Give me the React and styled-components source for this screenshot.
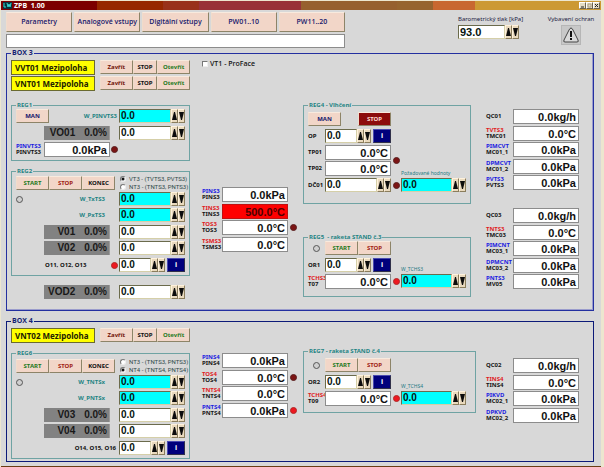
import React, { useId, useState } from "react";
import styled, { createGlobalStyle, css } from "styled-components";

const Global = createGlobalStyle`
  *, *::before, *::after { box-sizing: border-box; }
  body { margin: 0; background: #d8d8d8; }
  button, input { font: inherit; margin: 0; border-radius: 0; }
`;

const ui = `"Noto Sans", "Open Sans", sans-serif`;
const narrow = `"Open Sans", "Noto Sans", sans-serif`;
const plain = `Roboto, "Liberation Sans", sans-serif`;
const digits = `"Liberation Sans", Arial, sans-serif`;

const Window = styled.div`
  min-height: 100vh;
  display: flex;
  flex-direction: column;
  background: #d8d8d8;
  border: solid #ece6cf;
  border-width: 1px 3px 0 1px;
  font: 600 6px/6px ${ui};
  color: #111;
`;

const TitleBar = styled.header`
  display: flex;
  align-items: center;
  height: 9px;
  padding: 0 1px 0 2px;
  gap: 2px;
  font: bold 7px/9px ${narrow};
  color: #fff;
  background: linear-gradient(
    90deg,
    #7c0000 0 16%,
    #962800 16% 27%,
    #98321a 27% 33%,
    #983238 33% 50%,
    #96602f 50% 66%,
    #96642f 66% 72%,
    #c86830 72% 79%,
    #cc9933 79%
  );
`;

const Title = styled.h1`
  flex: 1;
  margin: 0;
  font: inherit;
  white-space: pre;
`;

const WinButton = styled.button`
  display: grid;
  place-items: center;
  width: 7px;
  height: 7px;
  padding: 0;
  color: #222;
  background: #e4dcc4;
  border: 1px solid;
  border-color: #fff #6b6450 #6b6450 #fff;
  svg { display: block; }
`;

const WinButtons = styled.div`
  display: flex;
`;

const Client = styled.main`
  flex: 1;
  padding: 2px 7px 4px 5px;
  border-bottom: 2px solid #6a3d12;
`;

const TopBar = styled.div`
  display: flex;
  justify-content: space-between;
  align-items: flex-start;
  height: 37px;
`;

const Commands = styled.div`
  flex: 0 1 339px;
  display: grid;
  gap: 2px;
`;

const Nav = styled.nav`
  display: grid;
  grid-template-columns: repeat(5, minmax(0, 1fr));
  gap: 2px;
`;

const Button = styled.button`
  height: ${(p) => (p.$tall ? 20 : 14)}px;
  flex: ${(p) => p.$w || 33} 1 0;
  min-width: 0;
  max-width: ${(p) => (p.$max ? p.$max + "px" : "none")};
  padding: 0;
  white-space: nowrap;
  font: ${(p) => (p.$tall ? "600 7px" : "bold 6px")}/8px ${(p) => (p.$tall ? narrow : ui)};
  color: ${(p) => p.$color || "#18186c"};
  background: ${(p) => p.$bg || "#f2d6c8"};
  border: 1px solid;
  border-color: #f8eade #8d8468 #8d8468 #f0dccb;
`;

const Message = styled.input`
  width: 100%;
  height: 14px;
  padding: 0 2px;
  background: #fff;
  border: 1px solid #8c8c8c;
`;

const Instruments = styled.div`
  display: flex;
  gap: 28px;
  padding-top: 4px;
`;

const Instrument = styled.div`
  display: flex;
  flex-direction: column;
  align-items: ${(p) => (p.$center ? "center" : "stretch")};
  gap: 2px;
  width: ${(p) => p.$w}px;
  font: 400 6px/7px ${ui};
  color: #222244;
  white-space: nowrap;
`;

const AlarmButton = styled.button`
  width: 20px;
  height: 20px;
  padding: 0;
  background: #c8c8c8;
  border: 1px solid #b6b6b6;
  svg { display: block; }
`;

const Box = styled.fieldset`
  min-width: 0;
  margin: ${(p) => (p.$second ? "6px 0 0" : 0)};
  padding: 3px 14px ${(p) => (p.$second ? 2 : 11)}px 4px;
  border: 1px solid ${(p) => (p.$second ? "#0c1a78" : "#2430a0")};
  box-shadow: ${(p) => (p.$second ? "none" : "inset -1px -1px 0 #9a9ccc")};
  > legend {
    margin: 0;
    padding: 0 1px;
    font: bold 7px/8px ${narrow};
    color: #141d72;
  }
`;

const ValveHeader = styled.div`
  display: grid;
  grid-template-columns: minmax(0, 179fr) minmax(0, 389fr);
  row-gap: 2px;
`;

const ValveRow = styled.div`
  grid-column: 1;
  display: grid;
  grid-template-columns: minmax(0, 84fr) minmax(0, 90fr);
  gap: 5px;
`;

const ValveState = styled.output`
  height: 15px;
  margin-bottom: -1px;
  padding-left: 3px;
  white-space: nowrap;
  font: bold 8px/13px ${ui};
  color: #222200;
  background: #ffff00;
  border: 1px solid #6a6a30;
`;

const ButtonRow = styled.div`
  display: flex;
`;

const Body = styled.div`
  display: grid;
  grid-template-columns:
    minmax(0, 179fr) minmax(0, 113fr)
    minmax(0, 183fr) minmax(0, 93fr);
  align-items: start;
  margin-top: ${(p) => p.$top}px;
`;

const Column = styled.div`
  min-width: 0;
  padding: ${(p) => p.$top || 0}px ${(p) => p.$right || 0}px 0 ${(p) => p.$left || 0}px;
`;

const Group = styled.fieldset`
  min-width: 0;
  margin: ${(p) => p.$gap || 0}px 0 0;
  padding: ${(p) => p.$top || 0}px ${(p) => p.$right || 4}px ${(p) => p.$bottom}px 4px;
  border: 1px solid #6fa3a3;
  > legend {
    margin: 0;
    padding: 0 1px;
    font: bold 6px/8px ${ui};
    color: #1f8484;
    white-space: pre;
  }
`;

const Stack = styled.div`
  display: grid;
  gap: 2px;
  margin-top: ${(p) => p.$gap || 0}px;
  > *:nth-child(even) { margin-top: 1px; }
`;

const Row = styled.div`
  display: grid;
  grid-template-columns:
    minmax(0, 28fr) minmax(0, 66fr)
    minmax(0, 9fr) minmax(0, 66fr);
  align-items: center;
  height: 14px;
  margin: 0 ${(p) => p.$inset || 0}px;
`;

const Lead = styled.div`
  grid-column: 1 / 4;
  display: flex;
  align-items: center;
  justify-content: space-between;
  padding-right: ${(p) => p.$right || 0}px;
`;

const Caption = styled.label`
  white-space: nowrap;
  font: bold 6px/8px ${ui};
  color: ${(p) => p.$color || "#111"};
`;

const ValvesCaption = styled(Caption)`
  grid-column: ${(p) => (p.$lit ? "2" : "1 / 4")};
  justify-self: ${(p) => (p.$lit ? "start" : "end")};
  padding: 0 3px 0 1px;
`;

const Opening = styled.output`
  grid-column: 2;
  display: flex;
  justify-content: flex-end;
  gap: 9px;
  height: 14px;
  padding-right: 2px;
  font: bold 10px/14px ${digits};
  color: #181818;
  background: #828282;
  border-right: 1px solid #9a9a9a;
`;

const Value = styled.output`
  display: block;
  height: 15px;
  margin-bottom: -1px;
  padding-right: 2px;
  text-align: right;
  font: bold 11px/14px ${digits};
  color: ${(p) => (p.$alarm ? "#4a0000" : "#111")};
  background: ${(p) => (p.$alarm ? "#ff0000" : "#fff")};
  border: 1px solid ${(p) => (p.$alarm ? "#c01010" : "#8c8c8c")};
`;

const TagLabel = styled.label`
  display: grid;
  white-space: nowrap;
  font: bold 6px/6px ${ui};
  color: #151515;
`;

const TagName = styled.span`
  color: ${(p) => (p.$red ? "#e01c24" : "#1c1ce0")};
`;

const ReadoutRow = styled.div`
  display: grid;
  grid-template-columns: ${(p) =>
    p.$led
      ? "minmax(0, 20fr) minmax(0, 66fr) minmax(0, 10fr)"
      : "minmax(0, 27fr) minmax(0, 66fr)"};
  align-items: center;
  height: 14px;
  padding-right: ${(p) => (p.$led ? 5 : 0)}px;
`;

const Led = styled.span`
  justify-self: center;
  align-self: center;
  width: 7px;
  height: 7px;
  border-radius: 50%;
  ${(p) =>
    ({
      dark: css`background: #7c1414; border: 1px solid #5a2020;`,
      on: css`background: #ee1820; border: 1px solid #b02828;`,
      off: css`background: #d0d0d0; border: 1px solid #555;`,
    })[p.$state]}
  grid-row: ${(p) => p.$row || "auto"};
  grid-column: ${(p) => p.$col || "auto"};
`;

const SpinBox = styled.div`
  display: flex;
  min-width: 0;
  height: 14px;
  padding-right: ${(p) => (p.$large ? 1 : 0)}px;
`;

const SpinInput = styled.input`
  flex: 1;
  width: 0;
  min-width: 0;
  padding: 0 0 0 1px;
  font: bold ${(p) => (p.$large ? 11 : 10)}px/12px ${digits};
  color: #06140f;
  background: ${(p) => (p.$cyan ? "#00ffff" : "#fff")};
  border: 1px solid;
  border-color: #6b6b4c #d5cfa8 #d5cfa8 #6b6b4c;
`;

const SpinButton = styled.button`
  display: grid;
  place-items: center;
  width: 7px;
  padding: 0;
  background: #e9d9bd;
  border: 1px solid;
  border-color: #fff2dc #8a7d5c #8a7d5c #fff2dc;
  svg { display: block; }
`;

const InfoButton = styled.button`
  width: 18px;
  margin-left: 2px;
  padding: 0;
  font: bold 7px/10px ${ui};
  color: #fff;
  background: #00007c;
  border: 1px solid;
  border-color: #4a4ab0 #30304a #30304a #4a4ab0;
`;

const Choices = styled.div`
  display: grid;
  gap: 1px;
  padding-left: 1px;
`;

const Choice = styled.label`
  display: flex;
  align-items: center;
  gap: 3px;
  font: 400 6px/7px ${plain};
  color: #2f4848;
  white-space: nowrap;
  input {
    appearance: none;
    flex: none;
    width: 6px;
    height: 6px;
    background: #fff;
    border: 1px solid;
    border-color: #777 #eee #eee #777;
  }
  input[type="radio"] { border-radius: 50%; }
  input[type="radio"]:checked { background: radial-gradient(#111 0 1px, #fff 2px); }
  input[type="checkbox"]:checked { background: #333; }
`;

const PanelChoice = styled(Choice)`
  align-self: start;
  gap: 2px;
  padding: 0 0 0 12px;
  font: 600 7px/7px ${narrow};
  color: #151515;
`;

const ControlGrid = styled.div`
  display: grid;
  grid-template-columns:
    minmax(0, 17fr) minmax(0, 66fr)
    minmax(0, 10fr) minmax(0, 65fr);
  grid-template-rows: ${(p) => (p.$five ? "15px 14px 14px 15px 14px" : "15px 14px 14px")};
  row-gap: 2px;
`;

const Cell = styled.div`
  grid-row: ${(p) => p.$row};
  grid-column: ${(p) => p.$col};
  display: ${(p) => (p.$flex ? "flex" : "block")};
  align-items: center;
  justify-content: space-between;
  min-width: 0;
  height: 14px;
`;

const SetpointCaption = styled.label`
  grid-row: ${(p) => p.$row};
  grid-column: 4;
  align-self: end;
  white-space: nowrap;
  font: 400 5px/6px ${ui};
  color: #1f7a84;
`;

const GREEN = "#1e7a1e";
const RED = "#a01c14";
const MAROON = "#701408";
const TEAL = "#1f8484";

function Arrow({ down }) {
  return (
    <svg width="5" height="10" viewBox="0 0 5 10" aria-hidden="true">
      <path d={down ? "M0 1H5L3 9H2Z" : "M2 1H3L5 9H0Z"} fill="#0c0c0c" />
    </svg>
  );
}

function Spin({ id, cyan, info, large, initial = "0.0", name }) {
  const [value, setValue] = useState(initial);
  const step = (d) => setValue((v) => ((parseFloat(v) || 0) + d).toFixed(1));
  return (
    <SpinBox $large={large}>
      <SpinInput
        id={id}
        aria-label={name}
        value={value}
        onChange={(e) => setValue(e.target.value)}
        $cyan={cyan}
        $large={large}
      />
      <SpinButton type="button" aria-label="Zvýšit" onClick={() => step(0.1)}>
        <Arrow />
      </SpinButton>
      <SpinButton type="button" aria-label="Snížit" onClick={() => step(-0.1)}>
        <Arrow down />
      </SpinButton>
      {info && <InfoButton type="button">i</InfoButton>}
    </SpinBox>
  );
}

function Tag({ id, top, red, name }) {
  return (
    <TagLabel htmlFor={id}>
      {top && <TagName $red={red}>{top}</TagName>}
      <span>{name}</span>
    </TagLabel>
  );
}

function Readout({ top, red, name, value, led, alarm, wide }) {
  const id = useId();
  return (
    <ReadoutRow $led={!wide}>
      <Tag id={id} top={top} red={red} name={name} />
      <Value id={id} $alarm={alarm}>{value}</Value>
      {led && <Led $state={led} />}
    </ReadoutRow>
  );
}

function Readouts({ items, wide, gap }) {
  return (
    <Stack $gap={gap}>
      {items.map(([top, name, value, opts]) => (
        <Readout
          key={name}
          top={top}
          name={name}
          value={value}
          wide={wide}
          red={top && top[0] === "T"}
          {...opts}
        />
      ))}
    </Stack>
  );
}

function Valve({ name }) {
  return (
    <ValveRow>
      <ValveState>{name} Mezipoloha</ValveState>
      <ButtonRow>
        <Button $color={MAROON}>Zavřít</Button>
        <Button $w={24} $color="#111">STOP</Button>
        <Button $color={GREEN}>Otevřít</Button>
      </ButtonRow>
    </ValveRow>
  );
}

function OpeningRow({ name, inset }) {
  return (
    <Row $inset={inset}>
      <Opening>
        <span>{name}</span>
        <span>0.0%</span>
      </Opening>
      <Cell $row="1" $col="4">
        <Spin name={name} />
      </Cell>
    </Row>
  );
}

function SetpointRow({ name, lead, right = 14 }) {
  const id = useId();
  return (
    <Row>
      <Lead $right={right}>
        {lead || <span />}
        <Caption htmlFor={id} $color={TEAL}>{name}</Caption>
      </Lead>
      <Spin id={id} cyan />
    </Row>
  );
}

function Regulator({ title, group, choices, checked, setpoints, openings, valves, led, gap, top, bottom }) {
  const id = useId();
  return (
    <Group $gap={gap} $top={top} $bottom={bottom}>
      <legend>{title}</legend>
      <Stack>
        <Row>
          <Lead $right={4}>
            <Button $color={GREEN}>START</Button>
            <Button $color={RED}>STOP</Button>
            <Button $color="#111">KONEC</Button>
          </Lead>
          <Choices>
            {choices.map((c, i) => (
              <Choice key={c}>
                <input type="radio" name={group} defaultChecked={i === checked} />
                {c}
              </Choice>
            ))}
          </Choices>
        </Row>
        <SetpointRow name={setpoints[0]} lead={<Led $state="off" />} />
        <SetpointRow name={setpoints[1]} />
        <OpeningRow name={openings[0]} />
        <OpeningRow name={openings[1]} />
        <Row>
          <ValvesCaption htmlFor={id} $lit={led}>{valves}</ValvesCaption>
          {led && <Led $state={led} $col="3" />}
          <Spin id={id} info />
        </Row>
      </Stack>
    </Group>
  );
}

function Rocket({ title, or, tag, name, setpoint, gap, top, right, bottom }) {
  const id = useId();
  return (
    <Group $gap={gap} $top={top} $right={right} $bottom={bottom}>
      <legend>{title}</legend>
      <ControlGrid>
        <Led $state="off" $row="1" $col="1" />
        <Cell $row="1" $col="2" $flex>
          <Button $color={GREEN}>START</Button>
          <Button $color={RED}>STOP</Button>
        </Cell>
        <Cell $row="2" $col="1" $flex>
          <Caption htmlFor={id + "or"}>{or}</Caption>
        </Cell>
        <Cell $row="2" $col="2">
          <Spin id={id + "or"} info />
        </Cell>
        <SetpointCaption $row="2" htmlFor={id + "sp"}>{setpoint}</SetpointCaption>
        <Cell $row="3" $col="1" $flex>
          <Tag id={id + "t"} top={tag} red name={name} />
        </Cell>
        <Cell $row="3" $col="2">
          <Value id={id + "t"}>0.0°C</Value>
        </Cell>
        <Led $state="on" $row="3" $col="3" />
        <Cell $row="3" $col="4">
          <Spin id={id + "sp"} cyan />
        </Cell>
      </ControlGrid>
    </Group>
  );
}

function Humidifier() {
  return (
    <Group $top={3} $bottom={11}>
      <legend>REG4 - Vlhčení</legend>
      <ControlGrid $five>
        <Cell $row="1" $col="1 / 3" $flex>
          <Button $max={33}>MAN</Button>
          <Button $max={33} $bg="#8c0c0c" $color="#ffd8d0">STOP</Button>
        </Cell>
        <Cell $row="2" $col="1" $flex><Caption htmlFor="op">OP</Caption></Cell>
        <Cell $row="2" $col="2"><Spin id="op" info /></Cell>
        <Cell $row="3" $col="1" $flex><Caption htmlFor="tp01">TP01</Caption></Cell>
        <Cell $row="3" $col="2"><Value id="tp01">0.0°C</Value></Cell>
        <Led $state="dark" $row="3 / 5" $col="3" />
        <Cell $row="4" $col="1" $flex><Caption htmlFor="tp02">TP02</Caption></Cell>
        <Cell $row="4" $col="2"><Value id="tp02">0.0°C</Value></Cell>
        <SetpointCaption $row="4" htmlFor="dc01sp">Požadované hodnoty</SetpointCaption>
        <Cell $row="5" $col="1" $flex><Caption htmlFor="dc01">DČ01</Caption></Cell>
        <Cell $row="5" $col="2"><Spin id="dc01" /></Cell>
        <Led $state="dark" $row="5" $col="3" />
        <Cell $row="5" $col="4"><Spin id="dc01sp" cyan /></Cell>
      </ControlGrid>
    </Group>
  );
}

export default function App() {
  return (
    <>
      <Global />
      <Window>
        <TitleBar>
          <svg width="9" height="7" viewBox="0 0 9 7" aria-hidden="true">
            <rect width="9" height="7" fill="#06343c" />
            <path d="M1 1V5H3M4 1L5 5L6 2L7 5L8 1" fill="none" stroke="#38d8d0" />
          </svg>
          <Title>{"ZPB  1.00"}</Title>
          <WinButtons>
            <WinButton aria-label="Minimalizovat">
              <svg width="5" height="5"><path d="M1 4H4" stroke="currentColor" /></svg>
            </WinButton>
            <WinButton aria-label="Obnovit">
              <svg width="5" height="5"><path d="M1 1H4V4H1Z" fill="none" stroke="#aaa087" /></svg>
            </WinButton>
            <WinButton aria-label="Zavřít okno">
              <svg width="5" height="5"><path d="M1 1L4 4M4 1L1 4" stroke="currentColor" /></svg>
            </WinButton>
          </WinButtons>
        </TitleBar>

        <Client>
          <TopBar>
            <Commands>
              <Nav>
                <Button $tall>Parametry</Button>
                <Button $tall>Analogové vstupy</Button>
                <Button $tall>Digitální vstupy</Button>
                <Button $tall>PW01..10</Button>
                <Button $tall>PW11..20</Button>
              </Nav>
              <Message aria-label="Hlášení" />
            </Commands>
            <Instruments>
              <Instrument $w={62}>
                <label htmlFor="baro">Barometrický tlak [kPa]</label>
                <Spin id="baro" large initial="93.0" />
              </Instrument>
              <Instrument $w={46} $center>
                <label htmlFor="alarm">Vybavení ochran</label>
                <AlarmButton id="alarm">
                  <svg width="18" height="18" viewBox="0 0 18 18" aria-hidden="true">
                    <path d="M9 2Q10 2 11 4L16 14Q17 16 15 16H3Q1 16 2 14L7 4Q8 2 9 2Z" fill="#dadada" stroke="#444" />
                    <path d="M8 5H10L10 11H8Z" fill="#111" />
                    <rect x="8" y="12" width="2" height="2" fill="#111" />
                  </svg>
                </AlarmButton>
              </Instrument>
            </Instruments>
          </TopBar>

          <Box>
            <legend>BOX 3</legend>
            <ValveHeader>
              <Valve name="VVT01" />
              <PanelChoice>
                <input type="checkbox" />
                VT1 - ProFace
              </PanelChoice>
              <Valve name="VNT01" />
            </ValveHeader>
            <Body $top={11}>
              <Column>
                <Group $bottom={4}>
                  <legend>REG1</legend>
                  <Stack>
                    <SetpointRow name="W_PINVTS3" right={2} lead={<Button $max={33}>MAN</Button>} />
                    <OpeningRow name="VO01" />
                    <Row>
                      <Tag id="pinvts3" top="PINVTS3" name="PINVTS3" />
                      <Value id="pinvts3">0.0kPa</Value>
                      <Led $state="dark" />
                    </Row>
                  </Stack>
                </Group>
                <Regulator
                  title="REG2"
                  group="reg2"
                  gap={6}
                  bottom={3}
                  choices={["VT3 - (TVTS3, PVTS3)", "NT3 - (TNTS3, PNTS3)"]}
                  checked={0}
                  setpoints={["W_TxTS3", "W_PxTS3"]}
                  openings={["V01", "V02"]}
                  valves="O11, O12, O13"
                  led="on"
                />
                <Stack $gap={9}>
                  <OpeningRow name="VOD2" inset={5} />
                </Stack>
              </Column>
              <Column $top={86} $left={12}>
                <Readouts
                  items={[
                    ["PINS3", "PINS3", "0.0kPa"],
                    ["TINS3", "TINS3", "500.0°C", { alarm: true }],
                    ["TOS3", "TOS3", "0.0°C", { led: "dark" }],
                    ["TSMS3", "TSMS3", "0.0°C"],
                  ]}
                />
              </Column>
              <Column $right={15}>
                <Humidifier />
                <Rocket
                  title="REG5  - raketa STAND č.3"
                  or="OR1"
                  tag="TCHS3"
                  name="T07"
                  setpoint="W_TCHS3"
                  gap={29}
                  bottom={8}
                />
              </Column>
              <Column $top={8}>
                <Readouts
                  wide
                  items={[
                    [null, "QC01", "0.0kg/h"],
                    ["TVTS3", "TMC01", "0.0°C"],
                    ["PIMCVT", "MC01_1", "0.0kPa"],
                    ["DPMCVT", "MC01_2", "0.0kPa"],
                    ["PVTS3", "PVTS3", "0.0kPa"],
                  ]}
                />
                <Readouts
                  wide
                  gap={19}
                  items={[
                    [null, "QC03", "0.0kg/h"],
                    ["TNTS3", "TMC03", "0.0°C"],
                    ["PIMCNT", "MC03_1", "0.0kPa"],
                    ["DPMCNT", "MC03_2", "0.0kPa"],
                    ["PNTS3", "MV05", "0.0kPa"],
                  ]}
                />
              </Column>
            </Body>
          </Box>

          <Box $second>
            <legend>BOX 4</legend>
            <ValveHeader>
              <Valve name="VNT02" />
            </ValveHeader>
            <Body $top={5}>
              <Column $top={2}>
                <Regulator
                  title="REG6"
                  group="reg6"
                  top={1}
                  bottom={3}
                  choices={["NT3 - (TNTS3, PNTS3)", "NT4 - (TNTS4, PNTS4)"]}
                  checked={1}
                  setpoints={["W_TNTSx", "W_PNTSx"]}
                  openings={["V03", "V04"]}
                  valves="O14, O15, O16"
                />
              </Column>
              <Column $top={6} $left={12}>
                <Readouts
                  items={[
                    ["PINS4", "PINS4", "0.0kPa"],
                    ["TOS4", "TOS4", "0.0°C", { led: "dark" }],
                    ["TNTS4", "TNTS4", "0.0°C"],
                    ["PNTS4", "PNTS4", "0.0kPa", { led: "on" }],
                  ]}
                />
              </Column>
              <Column $right={10}>
                <Rocket
                  title="REG7 - raketa STAND č.4"
                  or="OR2"
                  tag="TCHS4"
                  name="T09"
                  setpoint="W_TCHS4"
                  top={3}
                  right={9}
                  bottom={7}
                />
              </Column>
              <Column $top={11}>
                <Readouts
                  wide
                  items={[
                    [null, "QC02", "0.0kg/h"],
                    ["TINS4", "TINS4", "0.0°C"],
                    ["PIKVD", "MC02_1", "0.0kPa"],
                    ["DPKVD", "MC02_2", "0.0kPa"],
                  ]}
                />
              </Column>
            </Body>
          </Box>
        </Client>
      </Window>
    </>
  );
}
